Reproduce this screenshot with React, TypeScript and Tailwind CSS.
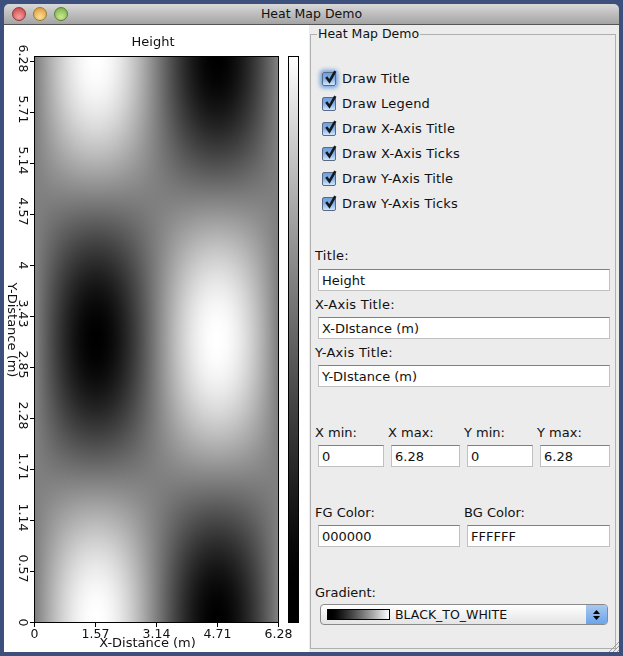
import { useEffect, useRef } from 'react';

const checks = ['Draw Title', 'Draw Legend', 'Draw X-Axis Title', 'Draw X-Axis Ticks', 'Draw Y-Axis Title', 'Draw Y-Axis Ticks'];
const xTicks = ['0', '1.57', '3.14', '4.71', '6.28'];
const yTicks = ['6.28', '5.71', '5.14', '4.57', '4', '3.43', '2.85', '2.28', '1.71', '1.14', '0.57', '0'];

// plot box in chart coordinates
const PX = 31;
const PY = 32;
const PW = 243;
const PH = 565;

function HeatCanvas() {
  const ref = useRef<HTMLCanvasElement>(null);
  useEffect(() => {
    const ctx = ref.current?.getContext('2d');
    if (!ctx) return;
    const img = ctx.createImageData(PW, PH);
    for (let j = 0; j < PH; j++) {
      for (let i = 0; i < PW; i++) {
        const x = (i / (PW - 1)) * Math.PI * 2;
        const y = (1 - j / (PH - 1)) * Math.PI * 2;
        const v = Math.round(((Math.sin(x) * Math.cos(y) + 1) / 2) * 255);
        const k = (j * PW + i) * 4;
        img.data[k] = v;
        img.data[k + 1] = v;
        img.data[k + 2] = v;
        img.data[k + 3] = 255;
      }
    }
    ctx.putImageData(img, 0, 0);
  }, []);
  return <canvas ref={ref} width={PW} height={PH} className="absolute left-[31px] top-[32px]" />;
}

function Chart() {
  return (
    <div className="relative h-full w-[305px] shrink-0 bg-white">
      <HeatCanvas />
      <svg width="305" height="627" className="absolute left-0 top-0" fontFamily="'DejaVu Sans', sans-serif" fontSize="12.5" fill="#111">
        <text x="149" y="20.5" textAnchor="middle" fontSize="13">Height</text>
        <rect x={PX - 0.5} y={PY - 0.5} width={PW + 1} height={PH + 1} fill="none" stroke="#000" />
        {xTicks.map((t, i) => {
          const x = 30.5 + 61 * i;
          return (
            <g key={t}>
              <line x1={x} x2={x} y1={PY + PH} y2={PY + PH + 5} stroke="#000" />
              <text x={x} y="613" textAnchor="middle">{t}</text>
            </g>
          );
        })}
        <text x="143.5" y="622" textAnchor="middle" fontSize="13">X-Distance (m)</text>
        {yTicks.map((t, i) => {
          const y = 597.5 - 51 * (11 - i);
          return (
            <g key={t}>
              <line x1={PX - 5} x2={PX} y1={y} y2={y} stroke="#000" />
              <text transform={`translate(15 ${t.length > 1 ? y - 3 : y}) rotate(90)`} textAnchor="middle">{t}</text>
            </g>
          );
        })}
        <text transform="translate(4 305) rotate(90)" textAnchor="middle" fontSize="13">Y-Distance (m)</text>
      </svg>
      <div className="absolute left-[284px] top-[31px] h-[567px] w-[11px] border border-black bg-gradient-to-b from-white to-black" />
    </div>
  );
}

function Check({ label, focused }: { label: string; focused?: boolean }) {
  return (
    <div className="flex h-[25px] items-center gap-[6px]">
      <span className={`relative h-[14px] w-[14px] rounded-[2px] border border-[#5a6a85] bg-gradient-to-b from-[#6f9fdc] via-[#86b2e8] to-[#d2e6fb] ${focused ? 'shadow-[0_0_4px_2px_#6f9fdc]' : ''}`}>
        <svg viewBox="0 0 14 14" className="absolute -top-[4px] left-0 h-[15px] w-[15px]">
          <path d="M3 7.5 L6 11.5 L11.5 2" fill="none" stroke="#14191f" strokeWidth="2.4" />
        </svg>
      </span>
      <span className="tracking-[0.2px]">{label}</span>
    </div>
  );
}

function Label({ text }: { text: string }) {
  return <div className="tracking-[0.3px]">{text}</div>;
}

function Field({ value, className }: { value: string; className?: string }) {
  return (
    <div className={`flex h-[22px] items-center border border-[#c0c0c0] border-t-[#808080] bg-white pl-[3px] pt-[1px] ${className ?? ''}`}>
      {value}
    </div>
  );
}

export default function App() {
  return (
    <div className="h-[656px] w-[623px] bg-[#3d4f7c] pl-[4px] pt-[4px] font-['DejaVu_Sans',sans-serif] text-[13px] leading-[18px] text-[#111]">
      <div className="flex h-[648px] w-[615px] flex-col overflow-hidden rounded-t-[5px]">
        <div className="relative flex h-[21px] shrink-0 items-center justify-center border-b border-[#555] bg-gradient-to-b from-[#d8d8d8] to-[#a4a4a4] text-[12.5px]">
          <div className="absolute left-[8px] top-[3px] flex gap-[7px]">
            <span className="h-[14px] w-[14px] rounded-full border border-[#8a3a3a] bg-[radial-gradient(circle_at_50%_75%,#f6a0a0,#c93c3c)]" />
            <span className="h-[14px] w-[14px] rounded-full border border-[#9a7a30] bg-[radial-gradient(circle_at_50%_75%,#fbe19a,#d9902e)]" />
            <span className="h-[14px] w-[14px] rounded-full border border-[#5a7f30] bg-[radial-gradient(circle_at_50%_75%,#cdea96,#6fa83c)]" />
          </div>
          <span>Heat Map Demo</span>
        </div>
        <div className="flex min-h-0 flex-1 bg-white">
          <Chart />
          <div className="relative flex-1 bg-[#ececec] pl-[1px] pr-[3px] pt-[3px]">
            <fieldset className="h-[621px] border border-[#b0b0b0] pl-[4px] pr-[5px]">
              <legend className="ml-[2px] px-[1px] text-[12.5px] leading-[12px]">Heat Map Demo</legend>
              <div className="mt-[26px] flex flex-col pl-[7px]">
                {checks.map((c, i) => <Check key={c} label={c} focused={i === 0} />)}
              </div>
              <div className="mt-[31px]"><Label text="Title:" /></div>
              <Field value="Height" className="ml-[3px] mt-[4px]" />
              <div className="mt-[5px]"><Label text="X-Axis Title:" /></div>
              <Field value="X-DIstance (m)" className="ml-[3px] mt-[3px]" />
              <div className="mt-[5px]"><Label text="Y-Axis Title:" /></div>
              <Field value="Y-DIstance (m)" className="ml-[3px] mt-[3px]" />
              <div className="mt-[37px] grid grid-cols-[73px_76px_73px_70px]">
                {['X min:', 'X max:', 'Y min:', 'Y max:'].map(l => <div key={l}>{l}</div>)}
              </div>
              <div className="ml-[3px] mt-[3px] flex gap-[7px]">
                <Field value="0" className="w-[66px]" />
                <Field value="6.28" className="w-[69px]" />
                <Field value="0" className="w-[66px]" />
                <Field value="6.28" className="w-[70px]" />
              </div>
              <div className="mt-[37px] grid grid-cols-[149px_1fr]"><div>FG Color:</div><div>BG Color:</div></div>
              <div className="ml-[3px] mt-[3px] flex gap-[7px]">
                <Field value="000000" className="w-[142px]" />
                <Field value="FFFFFF" className="w-[143px]" />
              </div>
              <div className="mt-[37px]">Gradient:</div>
              <div className="ml-[5px] mt-[2px] flex h-[21px] w-[288px] items-center overflow-hidden rounded-[4px] border border-[#8a8a8a] bg-gradient-to-b from-white to-[#e4e4e4] pl-[6px] text-[12.5px]">
                <span className="h-[11px] w-[63px] border border-black bg-gradient-to-r from-black to-white" />
                <span className="ml-[5px] flex-1">BLACK_TO_WHITE</span>
                <span className="flex h-full w-[21px] flex-col items-center justify-center gap-[2px] bg-gradient-to-b from-[#a9c8ee] to-[#6aa5ea] text-black">
                  <svg width="7" height="4" viewBox="0 0 7 4"><path d="M3.5 0 L7 4 H0 Z" /></svg>
                  <svg width="7" height="4" viewBox="0 0 7 4"><path d="M0 0 H7 L3.5 4 Z" /></svg>
                </span>
              </div>
            </fieldset>
            <svg width="12" height="12" className="absolute bottom-0 right-0" stroke="#999">
              <path d="M2 12 L12 2 M6 12 L12 6 M10 12 L12 10" />
            </svg>
          </div>
        </div>
      </div>
    </div>
  );
}
